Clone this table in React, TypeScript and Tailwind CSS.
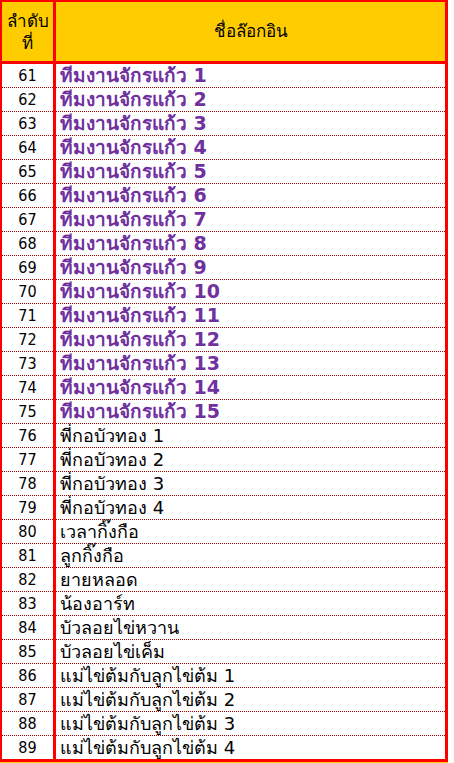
import React from "react";

const purple = [
  "ทีมงานจักรแก้ว 1",
  "ทีมงานจักรแก้ว 2",
  "ทีมงานจักรแก้ว 3",
  "ทีมงานจักรแก้ว 4",
  "ทีมงานจักรแก้ว 5",
  "ทีมงานจักรแก้ว 6",
  "ทีมงานจักรแก้ว 7",
  "ทีมงานจักรแก้ว 8",
  "ทีมงานจักรแก้ว 9",
  "ทีมงานจักรแก้ว 10",
  "ทีมงานจักรแก้ว 11",
  "ทีมงานจักรแก้ว 12",
  "ทีมงานจักรแก้ว 13",
  "ทีมงานจักรแก้ว 14",
  "ทีมงานจักรแก้ว 15",
];
const plain = [
  "พี่กอบัวทอง 1",
  "พี่กอบัวทอง 2",
  "พี่กอบัวทอง 3",
  "พี่กอบัวทอง 4",
  "เวลากิ๊งกือ",
  "ลูกกิ๊งกือ",
  "ยายหลอด",
  "น้องอาร์ท",
  "บัวลอยไข่หวาน",
  "บัวลอยไข่เค็ม",
  "แม่ไข่ต้มกับลูกไข่ต้ม 1",
  "แม่ไข่ต้มกับลูกไข่ต้ม 2",
  "แม่ไข่ต้มกับลูกไข่ต้ม 3",
  "แม่ไข่ต้มกับลูกไข่ต้ม 4",
];

const rows = [
  ...purple.map((n) => ({ name: n, bold: true })),
  ...plain.map((n) => ({ name: n, bold: false })),
];

export default function App() {
  return (
    <div
      className="w-[454px] h-[763px] bg-white overflow-hidden"
      style={{ fontFamily: '"DejaVu Sans", "Noto Sans", sans-serif' }}
    >
      <div className="w-[448px] border-t-2 border-l-2 border-r-[3px] border-[#ff0000]">
        <div className="grid grid-cols-[51px_3px_1fr] h-[59px] bg-[#ffcc00]">
          <div className="flex flex-col items-center justify-center text-[17px] leading-[22px] text-black">
            <span>ลำดับ</span>
            <span>ที่</span>
          </div>
          <div className="bg-[#ff0000]" />
          <div className="flex items-center justify-center text-[17px] text-black">
            ชื่อล๊อกอิน
          </div>
        </div>
        <div className="h-[3px] bg-[#ff0000]" />
        {rows.map((r, i) => (
          <div key={i}>
            <div className="grid grid-cols-[51px_3px_1fr] h-[23px]">
              <div
                className="flex items-center justify-center text-[16px] text-black leading-none pt-[1px]"
                style={{ fontFamily: '"DejaVu Sans Condensed", "DejaVu Sans", sans-serif' }}
              >
                {61 + i}
              </div>
              <div className="bg-[#ff0000]" />
              <div
                className={
                  "flex items-center pl-[4px] leading-none whitespace-nowrap " +
                  (r.bold ? "text-[19px] font-bold text-[#7030a0]" : "text-[18px] text-black")
                }
              >
                {r.name}
              </div>
            </div>
            {i < rows.length - 1 && (
              <div className="grid grid-cols-[51px_3px_1fr] h-[1px]">
                <div className="bg-[repeating-linear-gradient(to_right,#a00000_0_1px,transparent_1px_2px)]" />
                <div className="bg-[#ff0000]" />
                <div className="bg-[repeating-linear-gradient(to_right,#a00000_0_1px,transparent_1px_2px)]" />
              </div>
            )}
          </div>
        ))}
        <div className="h-[3px] bg-[#ff0000]" />
      </div>
      <div className="w-[448px] h-[10px] bg-[#ffcc00]" />
    </div>
  );
}
